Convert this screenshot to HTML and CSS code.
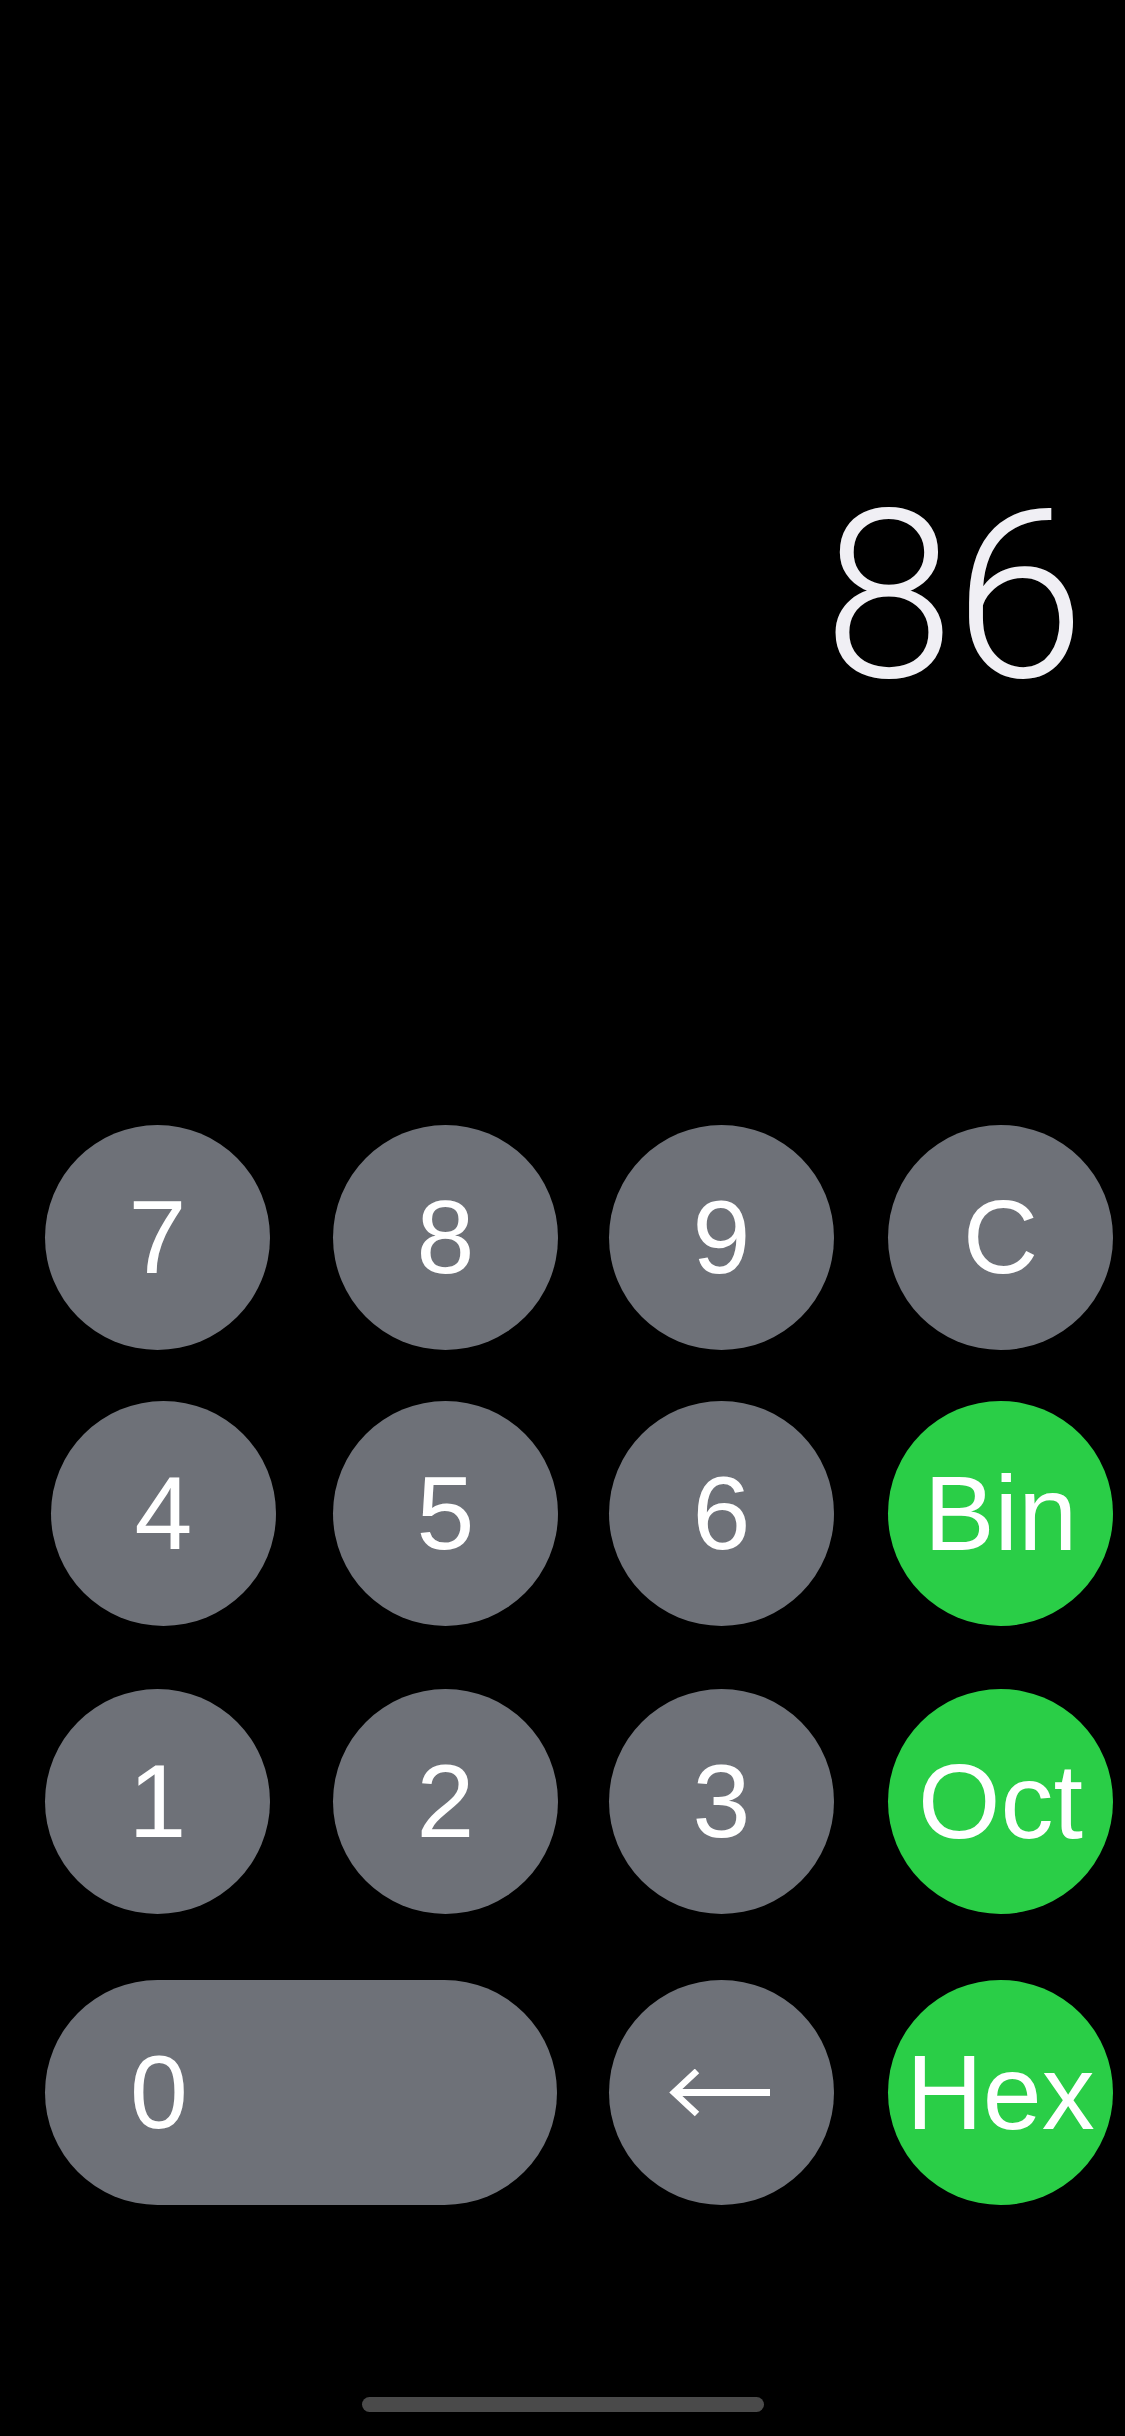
FILE: index.html
```html
<!DOCTYPE html>
<html lang="en">
<head>
<meta charset="utf-8">
<title>Calculator</title>
<link rel="stylesheet" href="styles.css">
</head>
<body>
<main class="screen">
  <section class="display">
    <div class="value">86</div>
  </section>
  <section class="keypad">
    <button class="key">7</button>
    <button class="key">8</button>
    <button class="key">9</button>
    <button class="key">C</button>

    <button class="key nudge">4</button>
    <button class="key">5</button>
    <button class="key">6</button>
    <button class="key base">Bin</button>

    <button class="key">1</button>
    <button class="key">2</button>
    <button class="key">3</button>
    <button class="key base">Oct</button>

    <button class="key zero"><span class="zero-label">0</span></button>
    <button class="key back" aria-label="Backspace">
      <svg class="arrow" width="104" height="48" viewBox="0 0 104 48">
        <path d="M101 23.5 H6" fill="none" stroke="#fff" stroke-width="7"/>
        <path d="M28 2 L5 23.5 L28 45" fill="none" stroke="#fff" stroke-width="6.5" stroke-linecap="butt" stroke-linejoin="miter"/>
      </svg>
    </button>
    <button class="key base">Hex</button>
  </section>
  <div class="home-indicator"></div>
</main>
</body>
</html>
```
FILE: styles.css
```css
html, body {
  margin: 0;
  padding: 0;
  background: #000;
}

.screen {
  width: 1125px;
  height: 2436px;
  display: flex;
  flex-direction: column;
  background: #000;
  overflow: hidden;
}

.display {
  height: 1125px;
  box-sizing: border-box;
  padding: 479px 40px 0 0;
}

.value {
  font-family: Roboto, "Helvetica Neue", Arial, sans-serif;
  font-weight: 300;
  font-size: 236px;
  line-height: 1;
  text-align: right;
  color: #f0eff4;
}

.keypad {
  display: grid;
  box-sizing: border-box;
  padding-left: 45px;
  grid-template-columns: 288px 276px 279px 225px;
  grid-template-rows: 276px 288px 291px 225px;
  align-items: start;
  justify-items: start;
}

.key {
  width: 225px;
  height: 225px;
  border: none;
  border-radius: 50%;
  padding: 0;
  margin: 0;
  background: #6e7178;
  color: #fff;
  font-family: "Liberation Sans", Arial, Helvetica, sans-serif;
  font-size: 104px;
  font-weight: 400;
  line-height: normal;
  display: flex;
  align-items: center;
  justify-content: center;
}

.key.base {
  background: #2ace47;
  font-size: 106px;
}

.key.nudge {
  margin-left: 6px;
}

.key.zero {
  grid-column: span 2;
  width: 512px;
  border-radius: 112.5px;
  justify-content: flex-start;
}

.zero-label {
  width: 228px;
  text-align: center;
}

.arrow {
  display: block;
  margin-left: -2px;
}

.home-indicator {
  width: 402px;
  height: 15px;
  border-radius: 8px;
  background: #4a4a4a;
  margin: 192px auto 0;
}
```
